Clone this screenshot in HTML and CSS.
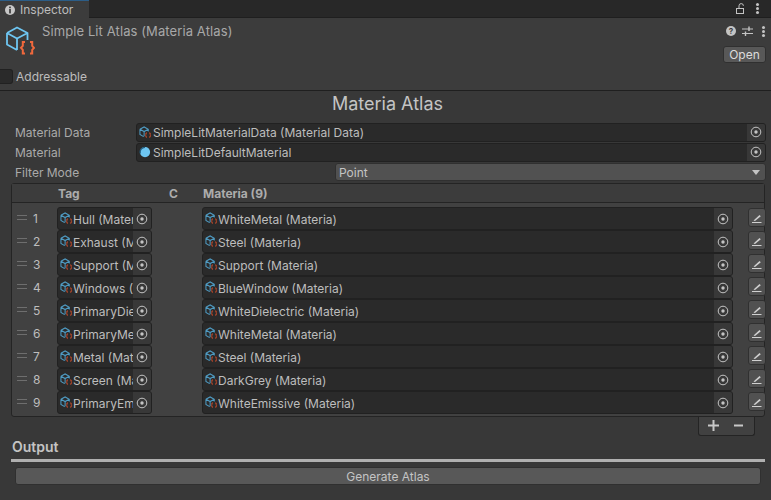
FILE: index.html
```html
<!DOCTYPE html>
<html lang="en">
<head>
    <meta charset="UTF-8">
    <meta name="viewport" content="width=device-width, initial-scale=1.0">
    <title>Inspector</title>
    <link rel="stylesheet" href="styles.css">
</head>
<body>
    <svg class="defs" width="0" height="0">
        <symbol id="asset" viewBox="0 0 14 14">
            <path d="M1 3.500 5.500 1 10 3.500V6M1 3.500v5.500l4 2.500M1 3.500 5.500 6 10 3.500M5.500 6v5" fill="none" stroke="#4f9cc4" stroke-width="1.100"/>
            <path d="M8.500 7.500h-1v1.500l-.6.8.6.8v1.400h1M11 7.500h1v1.500l.6.8-.6.8v1.400h-1" fill="none" stroke="#d9502c" stroke-width="1"/>
        </symbol>
        <symbol id="target" viewBox="0 0 14 14">
            <circle cx="7" cy="7" r="4.800" fill="none" stroke="#c4c4c4" stroke-width="1"/>
            <circle cx="7" cy="7" r="1.700" fill="#c4c4c4"/>
        </symbol>
        <symbol id="edit" viewBox="0 0 12 12">
            <path d="M1 10.500h9.500" fill="none" stroke="#d0d0d0" stroke-width="1"/>
            <path d="M2.500 8.500 8.500 3 9.800 4.200 4 9z" fill="#d0d0d0"/>
        </symbol>
    </svg>

    <div class="tabbar">
        <div class="tab">
            <svg class="tab-icon" viewBox="0 0 10 10" width="10" height="10"><circle cx="5" cy="5" r="5" fill="#c8c8c8"/><rect x="4.200" y="1.600" width="1.600" height="1.600" fill="#333"/><rect x="4.200" y="4" width="1.600" height="4.400" fill="#333"/></svg>
            <span>Inspector</span>
        </div>
        <div class="tab-tools">
            <svg viewBox="0 0 10 12" width="10" height="12"><path d="M3 5V2.800a2.200 2.200 0 0 1 4.400 0" fill="none" stroke="#c4c4c4"/><rect x=".5" y="5.500" width="7" height="5" fill="none" stroke="#c4c4c4"/></svg>
            <div class="dots"></div>
        </div>
    </div>

    <header class="header">
        <div class="header-top">
            <svg class="main-icon" viewBox="0 0 30 30" width="30" height="30">
                <path d="M2 7 12 1.500 22.500 7v7M2 7v11.500L12 24M2 7l10 5.500L22.500 7M12 12.500V24" fill="none" stroke="#6ec6f2" stroke-width="1.800" stroke-linejoin="round"/>
                <path d="M20 16h-2.200v3.800l-1.800 2 1.800 2V27.500H20M25 16h2.200v3.800l1.800 2-1.800 2V27.500H25" fill="none" stroke="#f0683c" stroke-width="2"/>
            </svg>
            <div class="asset-name">Simple Lit Atlas (Materia Atlas)</div>
            <div class="header-side">
                <div class="header-tools">
                    <svg viewBox="0 0 10 10" width="10" height="10"><circle cx="5" cy="5" r="5" fill="#c4c4c4"/><text x="5" y="8" text-anchor="middle" class="help-mark">?</text></svg>
                    <svg class="tune" viewBox="0 0 11 10" width="11" height="10"><path d="M0 3h11M0 7.500h11" stroke="#c4c4c4"/><path d="M7 .5v4.500M3.500 5.500V10" stroke="#c4c4c4" stroke-width="1.400"/></svg>
                    <div class="dots"></div>
                </div>
                <button class="open-btn">Open</button>
            </div>
        </div>
        <div class="addressable">
            <span class="checkbox"></span>
            <span>Addressable</span>
        </div>
    </header>

    <main class="body">
        <h1 class="title">Materia Atlas</h1>

        <div class="prop">
            <label>Material Data</label>
            <div class="field wide">
                <svg class="obj-icon"><use href="#asset"/></svg>
                <span class="field-text">SimpleLitMaterialData (Material Data)</span>
                <span class="picker"><svg><use href="#target"/></svg></span>
            </div>
        </div>
        <div class="prop">
            <label>Material</label>
            <div class="field wide">
                <svg class="obj-icon" viewBox="0 0 14 14"><circle cx="6.500" cy="6.500" r="5.500" fill="#6ec6f2"/><path d="M1.500 8a5 5 0 0 1 5-6.500" fill="none" stroke="#245f80" stroke-width="1.400"/></svg>
                <span class="field-text">SimpleLitDefaultMaterial</span>
                <span class="picker"><svg><use href="#target"/></svg></span>
            </div>
        </div>
        <div class="prop">
            <label>Filter Mode</label>
            <div class="popup">
                <span>Point</span>
                <span class="caret"></span>
            </div>
        </div>

        <section class="table">
            <div class="table-head">
                <span class="col-tag">Tag</span>
                <span class="col-c">C</span>
                <span class="col-materia">Materia (9)</span>
            </div>
            <div class="table-body">
                <div class="row">
                    <span class="handle"></span><span class="num">1</span>
                    <div class="field tag"><svg class="obj-icon"><use href="#asset"/></svg><span class="field-text">Hull (Materia)</span><span class="picker"><svg><use href="#target"/></svg></span></div>
                    <div class="field materia"><svg class="obj-icon"><use href="#asset"/></svg><span class="field-text">WhiteMetal (Materia)</span><span class="picker"><svg><use href="#target"/></svg></span></div>
                    <button class="edit"><svg><use href="#edit"/></svg></button>
                </div>
                <div class="row">
                    <span class="handle"></span><span class="num">2</span>
                    <div class="field tag"><svg class="obj-icon"><use href="#asset"/></svg><span class="field-text">Exhaust (Materia)</span><span class="picker"><svg><use href="#target"/></svg></span></div>
                    <div class="field materia"><svg class="obj-icon"><use href="#asset"/></svg><span class="field-text">Steel (Materia)</span><span class="picker"><svg><use href="#target"/></svg></span></div>
                    <button class="edit"><svg><use href="#edit"/></svg></button>
                </div>
                <div class="row">
                    <span class="handle"></span><span class="num">3</span>
                    <div class="field tag"><svg class="obj-icon"><use href="#asset"/></svg><span class="field-text">Support (Materia)</span><span class="picker"><svg><use href="#target"/></svg></span></div>
                    <div class="field materia"><svg class="obj-icon"><use href="#asset"/></svg><span class="field-text">Support (Materia)</span><span class="picker"><svg><use href="#target"/></svg></span></div>
                    <button class="edit"><svg><use href="#edit"/></svg></button>
                </div>
                <div class="row">
                    <span class="handle"></span><span class="num">4</span>
                    <div class="field tag"><svg class="obj-icon"><use href="#asset"/></svg><span class="field-text">Windows (Materia)</span><span class="picker"><svg><use href="#target"/></svg></span></div>
                    <div class="field materia"><svg class="obj-icon"><use href="#asset"/></svg><span class="field-text">BlueWindow (Materia)</span><span class="picker"><svg><use href="#target"/></svg></span></div>
                    <button class="edit"><svg><use href="#edit"/></svg></button>
                </div>
                <div class="row">
                    <span class="handle"></span><span class="num">5</span>
                    <div class="field tag"><svg class="obj-icon"><use href="#asset"/></svg><span class="field-text">PrimaryDielectric (Materia)</span><span class="picker"><svg><use href="#target"/></svg></span></div>
                    <div class="field materia"><svg class="obj-icon"><use href="#asset"/></svg><span class="field-text">WhiteDielectric (Materia)</span><span class="picker"><svg><use href="#target"/></svg></span></div>
                    <button class="edit"><svg><use href="#edit"/></svg></button>
                </div>
                <div class="row">
                    <span class="handle"></span><span class="num">6</span>
                    <div class="field tag"><svg class="obj-icon"><use href="#asset"/></svg><span class="field-text">PrimaryMetal (Materia)</span><span class="picker"><svg><use href="#target"/></svg></span></div>
                    <div class="field materia"><svg class="obj-icon"><use href="#asset"/></svg><span class="field-text">WhiteMetal (Materia)</span><span class="picker"><svg><use href="#target"/></svg></span></div>
                    <button class="edit"><svg><use href="#edit"/></svg></button>
                </div>
                <div class="row">
                    <span class="handle"></span><span class="num">7</span>
                    <div class="field tag"><svg class="obj-icon"><use href="#asset"/></svg><span class="field-text">Metal (Materia)</span><span class="picker"><svg><use href="#target"/></svg></span></div>
                    <div class="field materia"><svg class="obj-icon"><use href="#asset"/></svg><span class="field-text">Steel (Materia)</span><span class="picker"><svg><use href="#target"/></svg></span></div>
                    <button class="edit"><svg><use href="#edit"/></svg></button>
                </div>
                <div class="row">
                    <span class="handle"></span><span class="num">8</span>
                    <div class="field tag"><svg class="obj-icon"><use href="#asset"/></svg><span class="field-text">Screen (Materia)</span><span class="picker"><svg><use href="#target"/></svg></span></div>
                    <div class="field materia"><svg class="obj-icon"><use href="#asset"/></svg><span class="field-text">DarkGrey (Materia)</span><span class="picker"><svg><use href="#target"/></svg></span></div>
                    <button class="edit"><svg><use href="#edit"/></svg></button>
                </div>
                <div class="row">
                    <span class="handle"></span><span class="num">9</span>
                    <div class="field tag"><svg class="obj-icon"><use href="#asset"/></svg><span class="field-text">PrimaryEmissive (Materia)</span><span class="picker"><svg><use href="#target"/></svg></span></div>
                    <div class="field materia"><svg class="obj-icon"><use href="#asset"/></svg><span class="field-text">WhiteEmissive (Materia)</span><span class="picker"><svg><use href="#target"/></svg></span></div>
                    <button class="edit"><svg><use href="#edit"/></svg></button>
                </div>
            </div>
        </section>
        <div class="table-foot">
            <svg viewBox="0 0 11 11" width="11" height="11"><path d="M5.500 0v11M0 5.500h11" stroke="#c8c8c8" stroke-width="2"/></svg>
            <svg viewBox="0 0 9 11" width="9" height="11"><path d="M0 5.500h9" stroke="#c8c8c8" stroke-width="2"/></svg>
        </div>

        <h2 class="section-title">Output</h2>
        <div class="section-line"></div>
        <button class="generate">Generate Atlas</button>
    </main>
</body>
</html>
```

FILE: styles.css
```css
html, body
{
    margin: 0;
    height: 500px;
    overflow: hidden;
}

body
{
    background-color: #383838;
    color: #bdbdbd;
    font-family: Inter, "Liberation Sans", sans-serif;
    font-size: 12px;
}

button
{
    font-family: inherit;
    padding: 0;
}

.defs
{
    display: block;
    height: 0;
}

.tabbar
{
    height: 17px;
    display: flex;
    justify-content: space-between;
    background-color: #282828;
    border-bottom: 1px solid #1f1f1f;
}

.tab
{
    width: 89px;
    height: 18px;
    box-sizing: border-box;
    display: flex;
    align-items: center;
    gap: 5px;
    padding-left: 5px;
    background-color: #3c3c3c;
    border-top: 1px solid #2c5d87;
}

.tab-tools
{
    display: flex;
    align-items: center;
    gap: 10px;
    padding-right: 12px;
}

.dots
{
    width: 3px;
    height: 3px;
    border-radius: 50%;
    background-color: #c4c4c4;
    box-shadow: 0 -4px 0 #c4c4c4, 0 4px 0 #c4c4c4;
}

.header
{
    height: 73px;
    box-sizing: border-box;
    background-color: #3c3c3c;
    border-bottom: 1px solid #1f1f1f;
}

.header-top
{
    height: 51px;
    display: flex;
    padding-left: 5px;
}

.main-icon
{
    margin-top: 8px;
}

.asset-name
{
    margin: 5px 0 0 7px;
    font-size: 13px;
    letter-spacing: 0.1px;
    color: #a8a8a8;
    flex: 1;
}

.header-side
{
    display: flex;
    flex-direction: column;
    align-items: flex-end;
    padding-right: 5px;
}

.header-tools
{
    height: 12px;
    margin-top: 7px;
    display: flex;
    align-items: center;
    gap: 6px;
    padding-right: 1px;
}

.tune
{
    margin-right: 3px;
}

.help-mark
{
    font-size: 8px;
    font-weight: 700;
    fill: #3c3c3c;
}

.open-btn
{
    width: 43px;
    height: 17px;
    margin-top: 9px;
    background-color: #585858;
    color: #dcdcdc;
    font-size: 12px;
    border: 1px solid #303030;
    border-radius: 3px;
}

.addressable
{
    display: flex;
    align-items: center;
    gap: 3px;
}

.checkbox
{
    width: 12px;
    height: 13px;
    background-color: #2a2a2a;
    border: 1px solid #212121;
    border-left: none;
    border-radius: 0 3px 3px 0;
}

.body
{
    padding: 0 5px 0 11px;
}

.title
{
    margin: 0;
    padding-right: 2px;
    height: 32px;
    line-height: 26px;
    text-align: center;
    font-size: 18px;
    font-weight: 400;
    color: #c4c4c4;
}

.prop
{
    display: flex;
    align-items: center;
    height: 18px;
    margin-bottom: 2px;
    padding-left: 4px;
}

.prop label
{
    width: 121px;
    color: #aaaaaa;
}

.field
{
    display: flex;
    align-items: center;
    box-sizing: border-box;
    background-color: #2a2a2a;
    border: 1px solid #212121;
    border-radius: 3px;
    color: #bdbdbd;
    overflow: hidden;
}

.wide
{
    flex: 1;
    height: 19px;
}

.obj-icon
{
    width: 13px;
    height: 13px;
    margin-left: 2px;
    flex-shrink: 0;
}

.field-text
{
    flex: 1;
    min-width: 0;
    white-space: nowrap;
    overflow: hidden;
}

.wide .field-text
{
    margin-left: 1px;
}

.tag .field-text,
.materia .field-text
{
    padding-top: 1px;
}

.picker
{
    width: 18px;
    align-self: stretch;
    display: flex;
    align-items: center;
    justify-content: center;
    flex-shrink: 0;
    background-color: #383838;
}

.picker svg
{
    width: 14px;
    height: 14px;
}

.popup
{
    width: 431px;
    margin-left: 199px;
    height: 18px;
    box-sizing: border-box;
    display: flex;
    align-items: center;
    justify-content: space-between;
    padding: 0 5px 0 3px;
    background-color: #515151;
    border: 1px solid #303030;
    border-radius: 3px;
    color: #c4c4c4;
}

.caret
{
    width: 0;
    height: 0;
    border-left: 4px solid transparent;
    border-right: 4px solid transparent;
    border-top: 5px solid #c4c4c4;
}

.table
{
    width: 754px;
    margin-top: 2px;
    box-sizing: border-box;
    border: 1px solid #242424;
    border-radius: 3px;
    background-color: #414141;
}

.table-head
{
    height: 19px;
    box-sizing: border-box;
    display: flex;
    align-items: center;
    background-color: #3c3c3c;
    border-bottom: 1px solid #242424;
    font-weight: 700;
    color: #acacac;
}

.col-tag
{
    margin-left: 46px;
    width: 111px;
}

.col-c
{
    width: 34px;
}

.table-body
{
    padding: 4px 0 0 0;
    height: 213px;
    box-sizing: border-box;
}

.row
{
    height: 23px;
    display: flex;
    align-items: flex-start;
}

.handle
{
    width: 10px;
    height: 3px;
    margin: 8px 0 0 5px;
    border-top: 1px solid #6e6e6e;
    border-bottom: 1px solid #6e6e6e;
    flex-shrink: 0;
}

.num
{
    width: 24px;
    margin-left: 6px;
    flex-shrink: 0;
    line-height: 24px;
}

.tag
{
    width: 95px;
    height: 23px;
    flex-shrink: 0;
}

.materia
{
    width: 531px;
    height: 23px;
    margin-left: 50px;
    flex-shrink: 0;
}

.edit
{
    width: 18px;
    height: 19px;
    margin: 1px 0 0 15px;
    flex-shrink: 0;
    display: flex;
    align-items: center;
    justify-content: center;
    background-color: #515151;
    border: 1px solid #303030;
    border-radius: 3px;
}

.edit svg
{
    width: 12px;
    height: 12px;
}

.table-foot
{
    width: 57px;
    height: 19px;
    box-sizing: border-box;
    margin-left: 687px;
    display: flex;
    align-items: center;
    justify-content: center;
    gap: 15px;
    padding: 0 2px 2px 0;
    background-color: #414141;
    border: 1px solid #242424;
    border-top: none;
    border-radius: 0 0 3px 3px;
}

.section-title
{
    margin: 1px 0 0 1px;
    height: 20px;
    line-height: 20px;
    font-size: 14px;
    font-weight: 600;
    color: #c4c4c4;
}

.section-line
{
    width: 754px;
    height: 3px;
    margin-top: 2px;
    background-color: #b0b0b0;
}

.generate
{
    display: block;
    width: 746px;
    height: 18px;
    margin: 5px 0 0 4px;
    background-color: #585858;
    color: #c4c4c4;
    font-size: 12px;
    border: 1px solid #303030;
    border-radius: 3px;
}
```
